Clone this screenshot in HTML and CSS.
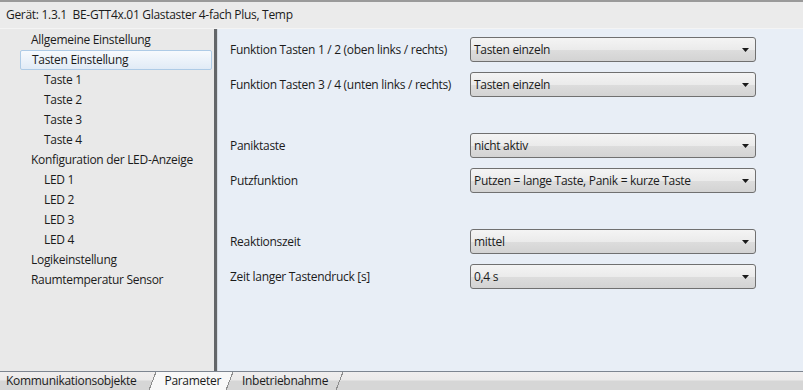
FILE: index.html
```html
<!DOCTYPE html>
<html lang="de">
<head>
    <meta charset="UTF-8">
    <title>Parameter</title>
    <link rel="stylesheet" href="styles.css">
</head>
<body>

    <div class="header">Gerät: 1.3.1&nbsp; BE-GTT4x.01 Glastaster 4-fach Plus, Temp</div>

    <div class="main">
        <!-- Baum links -->
        <div class="tree">
            <div class="item">Allgemeine Einstellung</div>
            <div class="item selected">Tasten Einstellung</div>
            <div class="item child">Taste 1</div>
            <div class="item child">Taste 2</div>
            <div class="item child">Taste 3</div>
            <div class="item child">Taste 4</div>
            <div class="item">Konfiguration der LED-Anzeige</div>
            <div class="item child">LED 1</div>
            <div class="item child">LED 2</div>
            <div class="item child">LED 3</div>
            <div class="item child">LED 4</div>
            <div class="item">Logikeinstellung</div>
            <div class="item">Raumtemperatur Sensor</div>
        </div>

        <div class="splitter"></div>

        <!-- Parameter rechts -->
        <div class="params">
            <div class="group">
                <div class="row">
                    <span class="label">Funktion Tasten 1 / 2 (oben links / rechts)</span>
                    <div class="combo"><span>Tasten einzeln</span><svg width="7" height="4" viewBox="0 0 7 4"><path d="M0 0H7L3.5 4Z"/></svg></div>
                </div>
                <div class="row">
                    <span class="label">Funktion Tasten 3 / 4 (unten links / rechts)</span>
                    <div class="combo"><span>Tasten einzeln</span><svg width="7" height="4" viewBox="0 0 7 4"><path d="M0 0H7L3.5 4Z"/></svg></div>
                </div>
            </div>
            <div class="group">
                <div class="row">
                    <span class="label">Paniktaste</span>
                    <div class="combo"><span>nicht aktiv</span><svg width="7" height="4" viewBox="0 0 7 4"><path d="M0 0H7L3.5 4Z"/></svg></div>
                </div>
                <div class="row">
                    <span class="label">Putzfunktion</span>
                    <div class="combo"><span>Putzen = lange Taste, Panik = kurze Taste</span><svg width="7" height="4" viewBox="0 0 7 4"><path d="M0 0H7L3.5 4Z"/></svg></div>
                </div>
            </div>
            <div class="group">
                <div class="row">
                    <span class="label">Reaktionszeit</span>
                    <div class="combo"><span>mittel</span><svg width="7" height="4" viewBox="0 0 7 4"><path d="M0 0H7L3.5 4Z"/></svg></div>
                </div>
                <div class="row">
                    <span class="label">Zeit langer Tastendruck [s]</span>
                    <div class="combo"><span>0,4 s</span><svg width="7" height="4" viewBox="0 0 7 4"><path d="M0 0H7L3.5 4Z"/></svg></div>
                </div>
            </div>
        </div>
    </div>

    <!-- Reiter unten -->
    <div class="tabs">
        <span class="tab first">Kommunikationsobjekte</span>
        <span class="sep sep-in"></span>
        <span class="tab active">Parameter</span>
        <span class="sep sep-out"></span>
        <span class="tab">Inbetriebnahme</span>
        <span class="sep"></span>
    </div>

</body>
</html>
```

FILE: styles.css
```css
body {
    margin: 0;
    height: 390px;
    overflow: hidden;
    font-family: "Open Sans", "Noto Sans", sans-serif;
    font-size: 12px;
    letter-spacing: -0.3px;
    color: #1b1b1b;
    background-color: #e9e9e9;
    border-top: 2px solid #9a9a9a;
    box-sizing: border-box;
}
.header {
    height: 26px;
    line-height: 26px;
    padding-left: 6px;
    background-color: #ebebeb;
    border-bottom: 1px solid #f4f4f4;
}
.main {
    display: flex;
    height: 342px;
}
.tree {
    width: 213px;
    padding-top: 1px;
    background-color: #e9e9e9;
}
.item {
    height: 20px;
    line-height: 20px;
    padding-left: 31px;
    white-space: nowrap;
}
.item.child {
    padding-left: 44px;
}
.item.selected {
    margin-left: 20px;
    margin-right: 1px;
    padding-left: 11px;
    height: 18px;
    line-height: 18px;
    border: 1px solid #aecbe6;
    border-radius: 2px;
    background: linear-gradient(#f7fafd, #e1ebf6);
}
.splitter {
    width: 3px;
    margin-left: 1px;
    background-color: #636669;
}
.params {
    flex: 1;
    padding-top: 8px;
    padding-left: 12px;
    background-color: #e8eef6;
    border-left: 1px solid #d5dbe2;
}
.group {
    display: flex;
    flex-direction: column;
    gap: 10px;
    margin-bottom: 36px;
}
.row {
    display: flex;
    align-items: center;
    height: 25px;
}
.label {
    flex: none;
    width: 240px;
    white-space: nowrap;
}
.combo {
    display: flex;
    align-items: center;
    justify-content: space-between;
    width: 275px;
    height: 23px;
    padding: 0 6px 0 3px;
    border: 1px solid #707070;
    border-radius: 3px;
    background: linear-gradient(#f4f4f4 0%, #ebebeb 50%, #dddddd 51%, #d3d3d3 100%);
    white-space: nowrap;
}
.combo svg {
    fill: #1a1a1a;
}
.tabs {
    display: flex;
    height: 18px;
    line-height: 18px;
    border-top: 1px solid #7d8590;
    background: linear-gradient(#f0eeee 0px, #ebeaea 8px, #d6d6d6 9px, #d6d6d6 100%);
}
.tab {
    padding: 0 8px 0 9px;
}
.tab.first {
    padding-left: 6px;
    padding-right: 13px;
}
.tab.active {
    padding: 0 5px 0 8px;
    background-color: #f8f8f8;
}
.sep {
    width: 7px;
    background: linear-gradient(to bottom right, transparent 46%, #8d8d8d 46%, #8d8d8d 54%, transparent 54%);
}
.sep-in {
    background: linear-gradient(to bottom right, transparent 46%, #8d8d8d 46%, #8d8d8d 54%, #f8f8f8 54%);
}
.sep-out {
    background: linear-gradient(to bottom right, #f8f8f8 46%, #8d8d8d 46%, #8d8d8d 54%, transparent 54%);
}
```
